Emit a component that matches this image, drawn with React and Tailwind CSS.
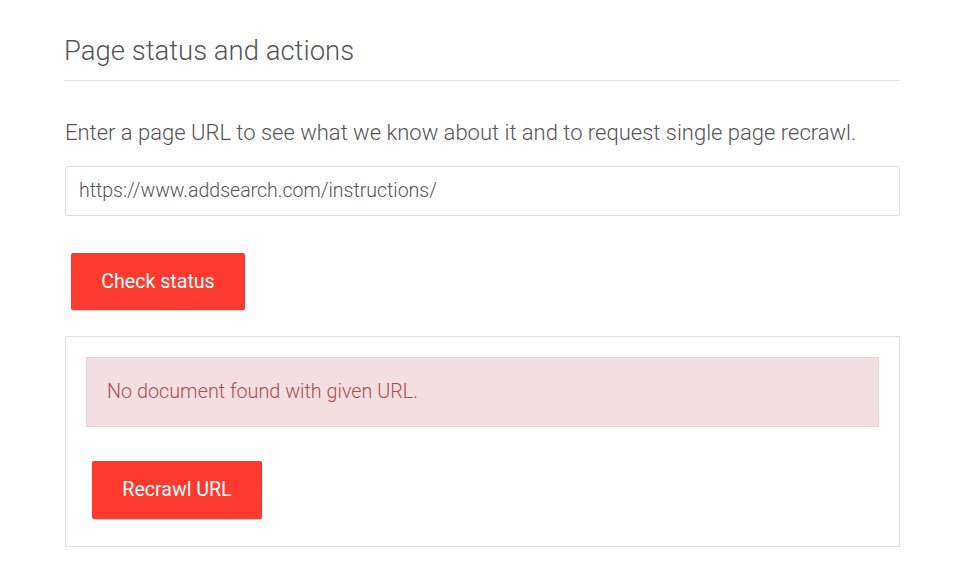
export default function App() {
  return (
    <div className="min-h-[585px] w-[960px] bg-white font-['Roboto',sans-serif] text-[#555]">
      <div className="ml-[64px] w-[836px] pt-[32px]">
        <h2 className="text-[27.5px] font-light leading-[38px] text-[#555]">Page status and actions</h2>
        <div className="mt-[10px] h-px bg-[#e0e0e0]" />

        <p className="mt-[37px] pl-px text-[22px] font-light leading-[30px] text-[#555]">
          Enter a page URL to see what we know about it and to request single page recrawl.
        </p>

        <div className="mt-[18px] ml-px flex h-[50px] items-center rounded-[3px] border border-[#dcdcdc] px-[13px] text-[19.5px] font-light text-[#555]">
          https://www.addsearch.com/instructions/
        </div>

        <button className="mt-[37px] ml-[7px] flex h-[57px] w-[174px] items-center justify-center rounded-[2px] bg-[#fe3a2f] text-[19.6px] text-white shadow-[0_1px_1px_rgba(0,0,0,0.15)]">
          Check status
        </button>

        <div className="mt-[26px] ml-px border border-[#e0e0e0] px-[20px] pt-[20px] pb-[27px]">
          <div className="flex h-[70px] items-center border border-[#ecd0d2] bg-[#f3dfe1] px-[20px] text-[19.8px] font-light text-[#b24a4a]">
            No document found with given URL.
          </div>
          <button className="mt-[34px] ml-[6px] flex h-[58px] w-[170px] items-center justify-center rounded-[2px] bg-[#fe3a2f] text-[19.6px] text-white shadow-[0_1px_1px_rgba(0,0,0,0.15)]">
            Recrawl URL
          </button>
        </div>
      </div>
    </div>
  );
}
